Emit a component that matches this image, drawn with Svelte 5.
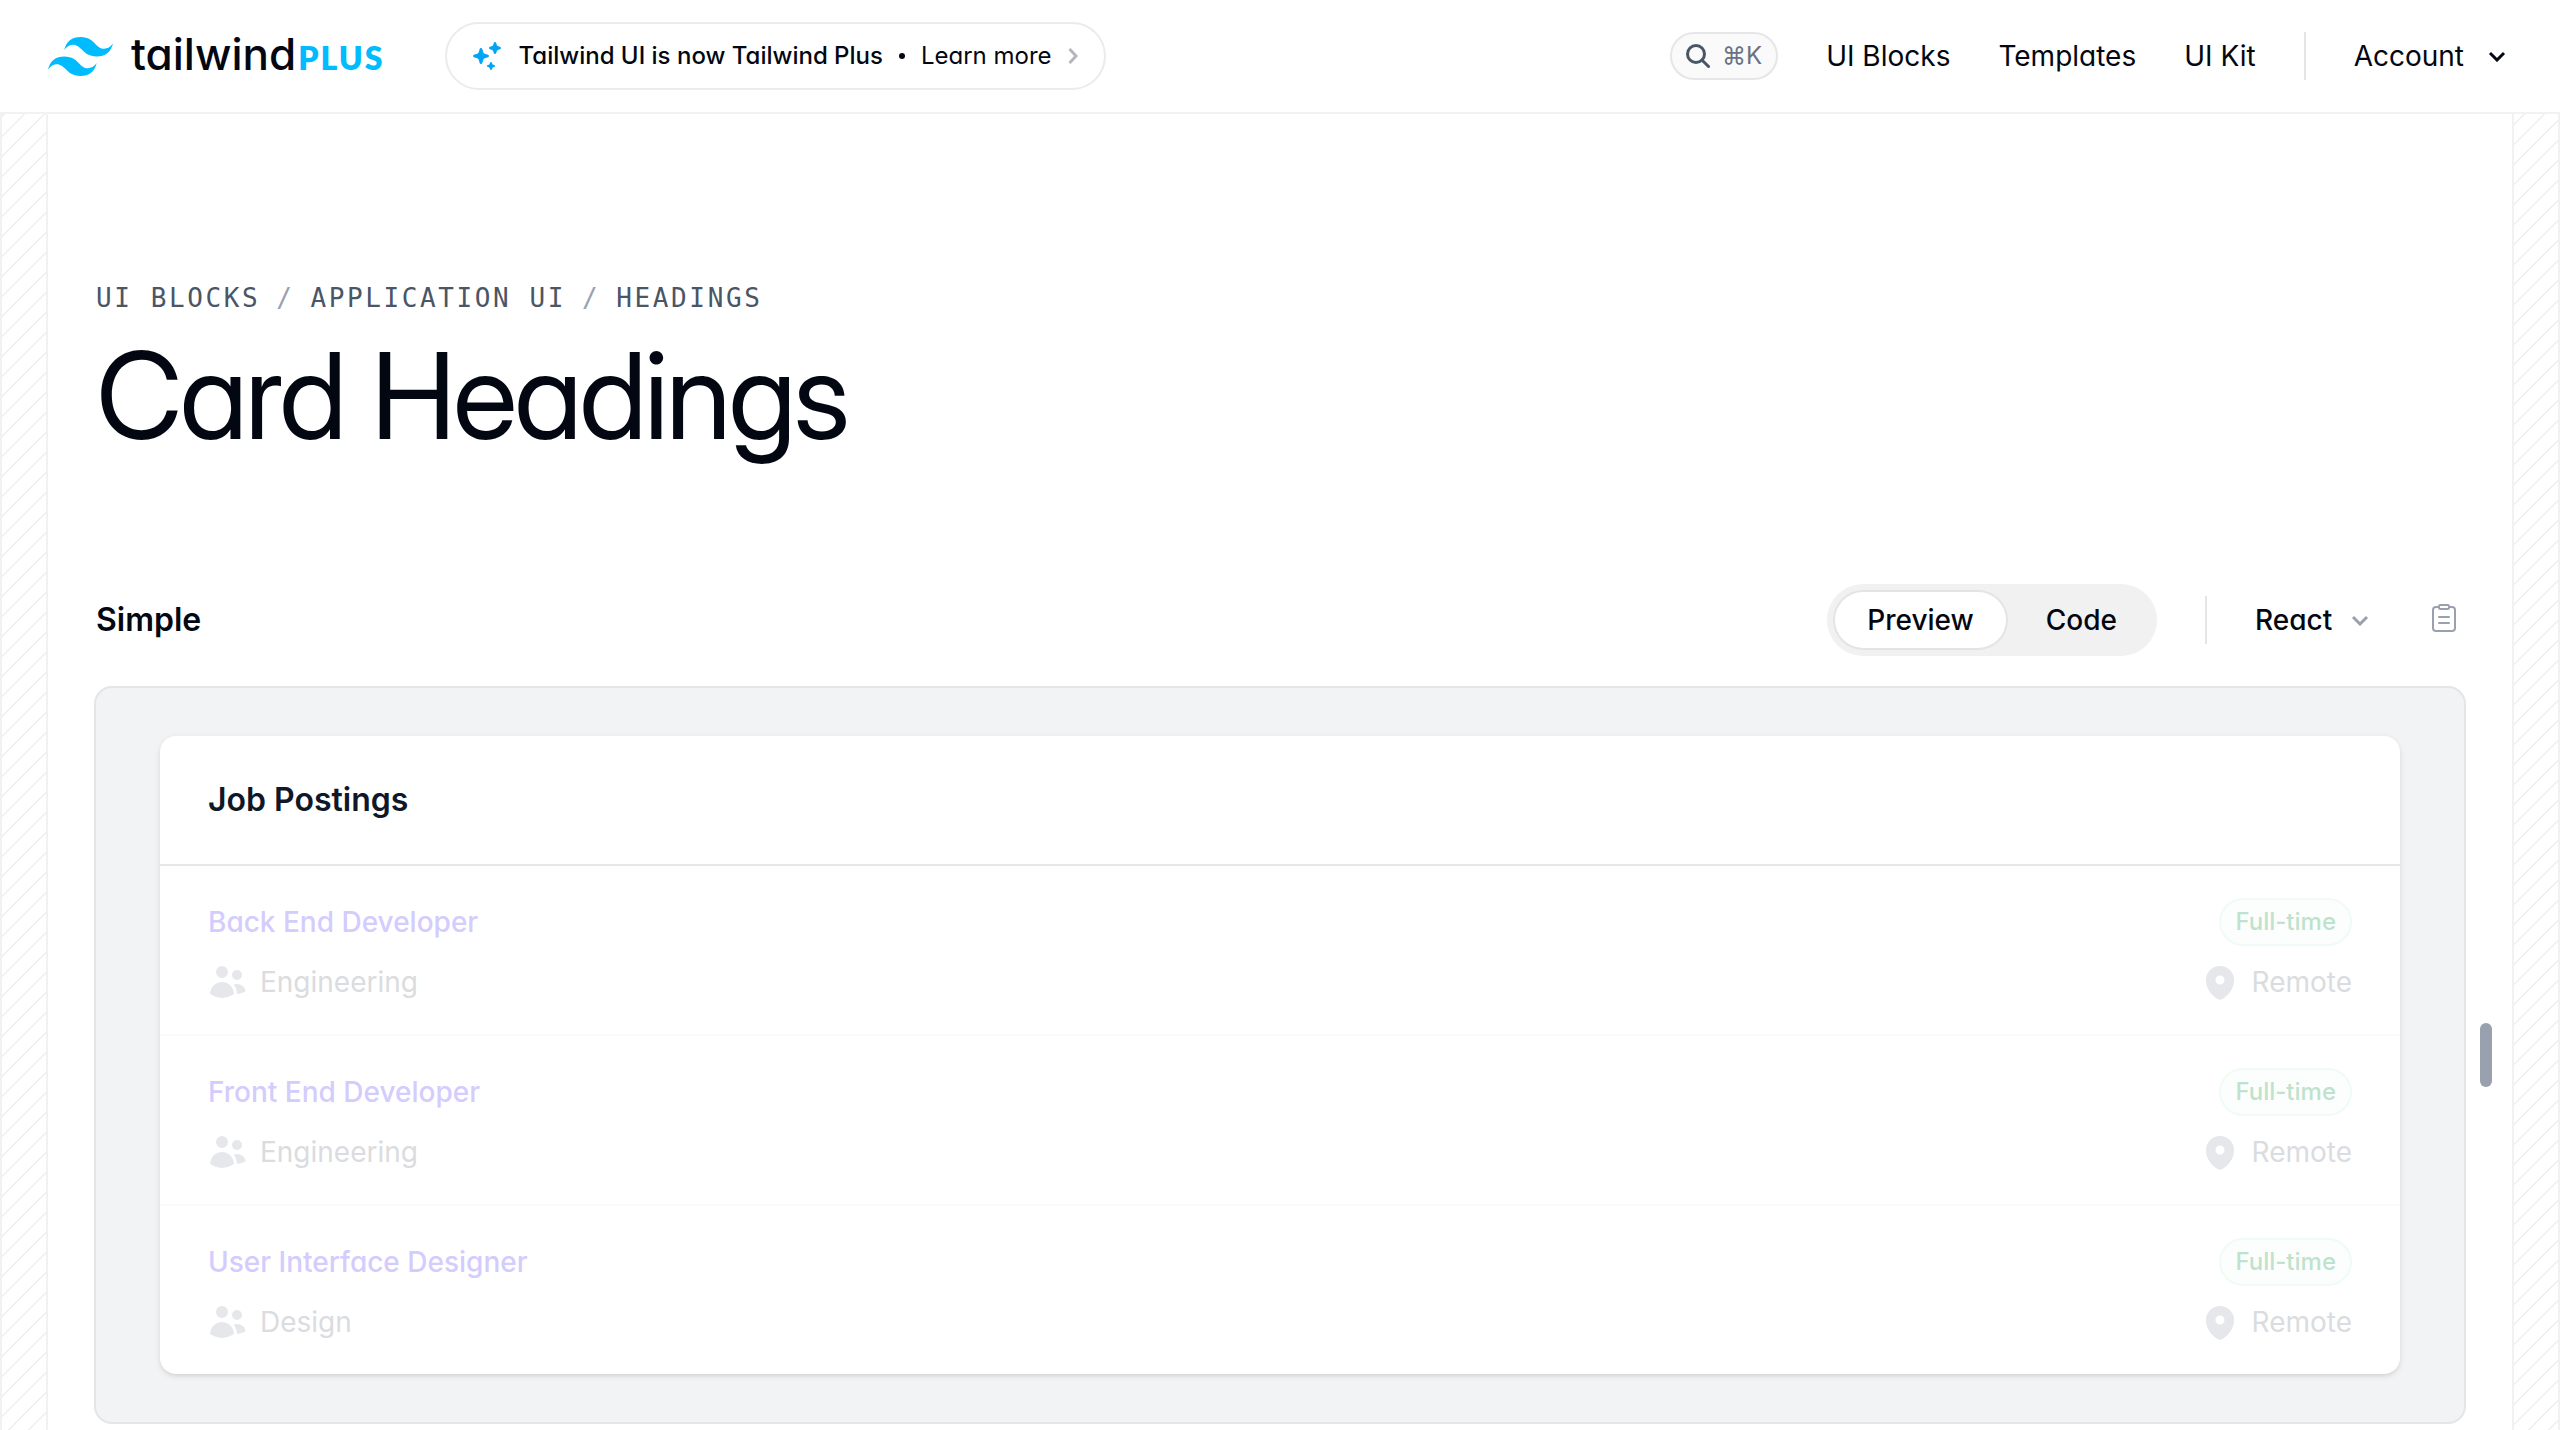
<script lang="ts">
  const nav = ['UI Blocks', 'Templates', 'UI Kit'];
  const crumbs = ['UI Blocks', 'Application UI', 'Headings'];
  const jobs = [
    { title: 'Back End Developer', team: 'Engineering' },
    { title: 'Front End Developer', team: 'Engineering' },
    { title: 'User Interface Designer', team: 'Design' },
  ];
</script>

<header class="topbar">
  <a class="logo" href="#home" aria-label="Tailwind Plus">
    <svg class="wave" viewBox="0 0 54 32.4" fill="currentColor" aria-hidden="true">
      <path d="M27 0c-7.2 0-11.7 3.6-13.5 10.8 2.7-3.6 5.85-4.95 9.45-4.05 2.054.513 3.522 2.004 5.147 3.653C30.744 13.09 33.808 16.2 40.5 16.2c7.2 0 11.7-3.6 13.5-10.8-2.7 3.6-5.85 4.95-9.45 4.05-2.054-.513-3.522-2.004-5.147-3.653C36.756 3.11 33.692 0 27 0zM13.5 16.2C6.3 16.2 1.8 19.8 0 27c2.7-3.6 5.85-4.95 9.45-4.05 2.054.514 3.522 2.004 5.147 3.653C17.244 29.29 20.308 32.4 27 32.4c7.2 0 11.7-3.6 13.5-10.8-2.7 3.6-5.85 4.95-9.45 4.05-2.054-.513-3.522-2.004-5.147-3.653C23.256 19.31 20.192 16.2 13.5 16.2z" />
    </svg>
    <span class="wordmark">tailwind</span><span class="plus">PLUS</span>
  </a>
  <a class="banner" href="#plus">
    <svg class="sparkles" viewBox="0 0 28 28" fill="currentColor" aria-hidden="true">
      <path d="M8 6c.7 0 1.100.4 1.300 1l1 3.200c.3.800.7 1.200 1.500 1.500l3.200 1c.6.200 1 .7 1 1.300s-.4 1.100-1 1.300l-3.200 1c-.8.3-1.200.7-1.500 1.500l-1 3.200c-.2.600-.6 1-1.300 1s-1.100-.4-1.300-1l-1-3.200c-.3-.8-.7-1.200-1.500-1.500l-3.200-1c-.6-.2-1-.7-1-1.300s.4-1.100 1-1.300l3.200-1c.8-.3 1.200-.7 1.500-1.500l1-3.200c.2-.6.6-1 1.300-1z" />
      <path d="M22 0c.6 0 1 .4 1.200 1l.5 1.500c.3 1 .8 1.500 1.800 1.800l1.500.5c.6.200 1 .6 1 1.200s-.4 1-1 1.200l-1.500.5c-1 .3-1.500.8-1.800 1.800l-.5 1.500c-.2.600-.6 1-1.200 1s-1-.4-1.200-1l-.5-1.500c-.3-1-.8-1.500-1.800-1.800l-1.500-.5c-.6-.2-1-.6-1-1.200s.4-1 1-1.200l1.500-.5c1-.3 1.500-.8 1.800-1.800l.5-1.500c.2-.6.6-1 1.200-1z" />
      <path d="M18 20c.5 0 .9.3 1 .8l.3.900c.2.600.4.8 1 1l.9.300c.5.100.8.500.8 1s-.3.900-.8 1l-.9.300c-.6.200-.8.400-1 1l-.3.900c-.1.500-.5.800-1 .8s-.9-.3-1-.8l-.3-.9c-.2-.6-.4-.8-1-1l-.9-.3c-.5-.1-.8-.5-.8-1s.3-.9.8-1l.9-.3c.6-.2.8-.4 1-1l.3-.9c.1-.5.5-.8 1-.8z" />
    </svg>
    <strong>Tailwind UI is now Tailwind Plus</strong>
    <svg class="dot" viewBox="0 0 6 6" fill="currentColor" aria-hidden="true"><circle cx="3" cy="3" r="3" /></svg>
    <span>Learn more</span>
    <svg class="next" viewBox="0 0 10 16" aria-hidden="true"><path d="M1.500 1 8 8l-6.500 7" /></svg>
  </a>
  <nav class="nav">
    <button class="search" type="button" aria-label="Search">
      <svg viewBox="0 0 24 24" aria-hidden="true"><circle cx="10" cy="10" r="8.500" /><path d="m16.200 16.200 6.300 6.300" /></svg>
      <kbd>⌘K</kbd>
    </button>
    {#each nav as item}
      <a href="#nav">{item}</a>
    {/each}
    <span class="rule"></span>
    <button class="account" type="button">
      Account
      <svg viewBox="0 0 18 11" aria-hidden="true"><path d="m2 2 7 7 7-7" /></svg>
    </button>
  </nav>
</header>

<div class="frame">
  <div class="gutter"></div>
  <main>
    <nav class="crumbs" aria-label="Breadcrumb">
      {#each crumbs as crumb, i}
        {#if i > 0}<span class="slash">/</span>{/if}
        <a href="#crumb">{crumb}</a>
      {/each}
    </nav>
    <h1>Card Headings</h1>

    <section>
      <div class="toolbar">
        <h2>Simple</h2>
        <div class="toggle">
          <button class="active" type="button">Preview</button>
          <button type="button">Code</button>
        </div>
        <span class="rule"></span>
        <label class="lang">
          <select aria-label="Framework">
            <option>React</option>
          </select>
          <svg viewBox="0 0 18 11" aria-hidden="true"><path d="m2 2 7 7 7-7" /></svg>
        </label>
        <button class="copy" type="button" aria-label="Copy code">
          <svg viewBox="0 0 24 28" aria-hidden="true">
            <path d="M6 3H4a3 3 0 0 0-3 3v18a3 3 0 0 0 3 3h16a3 3 0 0 0 3-3V6a3 3 0 0 0-3-3h-2" />
            <rect x="7" y="1" width="10" height="4" rx="1.500" />
            <path d="M7 13h10M7 19h10" />
          </svg>
        </button>
      </div>

      <div class="stage">
        <div class="preview">
          <article class="card">
            <h3>Job Postings</h3>
            <ul>
              {#each jobs as job}
                <li>
                  <div class="line">
                    <a href="#job">{job.title}</a>
                    <span class="badge">Full-time</span>
                  </div>
                  <div class="line meta">
                    <span class="fact">
                      <svg viewBox="0 0 20 20" fill="currentColor" aria-hidden="true">
                        <path d="M7 8a3 3 0 1 0 0-6 3 3 0 0 0 0 6ZM14.500 9a2.500 2.500 0 1 0 0-5 2.500 2.500 0 0 0 0 5ZM1.615 16.428a1.224 1.224 0 0 1-.569-1.175 6.002 6.002 0 0 1 11.908 0c.058.467-.172.920-.570 1.174A9.953 9.953 0 0 1 7 18a9.953 9.953 0 0 1-5.385-1.572ZM14.500 16h-.106c.070-.297.088-.611.048-.933a7.470 7.470 0 0 0-1.588-3.755 4.502 4.502 0 0 1 5.874 2.636.818.818 0 0 1-.360.980A7.465 7.465 0 0 1 14.500 16Z" />
                      </svg>
                      {job.team}
                    </span>
                    <span class="fact">
                      <svg viewBox="0 0 20 20" fill="currentColor" aria-hidden="true">
                        <path fill-rule="evenodd" d="m9.690 18.933.003.001C9.890 19.020 10 19 10 19s.110.020.308-.066l.002-.001.006-.003.018-.008a5.741 5.741 0 0 0 .281-.140c.186-.096.446-.240.757-.433.620-.384 1.445-.966 2.274-1.765C15.302 14.988 17 12.493 17 9A7 7 0 1 0 3 9c0 3.492 1.698 5.988 3.355 7.584a13.731 13.731 0 0 0 2.273 1.765 11.842 11.842 0 0 0 .976.544l.062.029.018.008.006.003ZM10 11.250a2.250 2.250 0 1 0 0-4.500 2.250 2.250 0 0 0 0 4.500Z" />
                      </svg>
                      Remote
                    </span>
                  </div>
                </li>
              {/each}
            </ul>
          </article>
        </div>
        <div class="handle"></div>
      </div>
    </section>
  </main>
  <div class="gutter"></div>
</div>

<style>
  :global(body) {
    background: #fff;
    color: #030712;
    font-family: Inter, sans-serif;
    font-size: 28px;
    line-height: 40px;
    font-feature-settings: 'cv11';
    -webkit-font-smoothing: antialiased;
  }
  :global(html) {
    scrollbar-width: none;
  }
  :global(#app) {
    display: flex;
    flex-direction: column;
    min-height: 100vh;
  }
  a {
    color: inherit;
    text-decoration: none;
  }
  button,
  select {
    appearance: none;
    margin: 0;
    padding: 0;
    border: 0;
    background: none;
    color: inherit;
    font: inherit;
    font-feature-settings: inherit;
  }
  h1,
  h2,
  h3,
  ul {
    margin: 0;
    padding: 0;
    list-style: none;
  }
  svg {
    display: block;
    flex: none;
  }

  .topbar {
    display: flex;
    align-items: center;
    height: 112px;
    padding: 0 48px;
    border-bottom: 2px solid #f2f2f3;
  }
  .logo {
    display: flex;
    align-items: baseline;
    line-height: 56px;
  }
  .wave {
    align-self: center;
    width: 65px;
    height: 39px;
    margin-right: 18px;
    color: #00bcff;
  }
  .wordmark {
    font-size: 44px;
    font-weight: 500;
  }
  .plus {
    margin-left: 2px;
    color: #00bcff;
    font-family: Lato, sans-serif;
    font-size: 32px;
    font-weight: 800;
    letter-spacing: 2px;
  }
  .banner {
    display: flex;
    align-items: center;
    margin-left: 60px;
    padding: 12px 26px;
    border: 2px solid #ebebec;
    border-radius: 34px;
    font-size: 24px;
  }
  .banner strong {
    font-weight: 500;
  }
  .sparkles {
    width: 28px;
    height: 28px;
    margin-right: 18px;
    color: #00a6f4;
  }
  .dot {
    width: 6px;
    height: 6px;
    margin: 0 16px;
  }
  .next {
    width: 10px;
    height: 16px;
    margin-left: 16px;
    fill: none;
    stroke: #b5b7bc;
    stroke-width: 3;
  }
  .nav {
    display: flex;
    align-items: center;
    gap: 48px;
    margin-left: auto;
  }
  .search {
    display: flex;
    align-items: center;
    gap: 12px;
    box-sizing: border-box;
    height: 48px;
    padding: 0 14px;
    border: 2px solid #e6e6e8;
    border-radius: 24px;
    background: #fafafa;
    color: #6a7282;
    font-size: 24px;
  }
  .search svg {
    width: 24px;
    height: 24px;
    fill: none;
    stroke: #4a5565;
    stroke-width: 3;
    stroke-linecap: round;
  }
  kbd {
    font-family: inherit;
  }
  .rule {
    width: 2px;
    height: 48px;
    background: #e5e5e7;
  }
  .account {
    display: flex;
    align-items: center;
    gap: 24px;
    padding-right: 6px;
  }
  .account svg,
  .lang svg {
    width: 18px;
    height: 11px;
    fill: none;
    stroke: currentColor;
    stroke-width: 3;
  }

  .frame {
    display: flex;
    flex: 1;
  }
  .gutter {
    flex: none;
    box-sizing: border-box;
    width: 48px;
    border: solid #f1f1f2;
    border-width: 0 2px;
    background-image: repeating-linear-gradient(
      315deg,
      #efeff0 0,
      #efeff0 2px,
      transparent 0,
      transparent 50%
    );
    background-size: 20px 20px;
    background-attachment: fixed;
  }
  main {
    flex: 1;
    padding: 160px 48px 0;
  }
  .crumbs {
    display: flex;
    gap: 16px;
    color: #4a5565;
    font-family: 'DejaVu Sans Mono', monospace;
    font-size: 26px;
    line-height: 48px;
    letter-spacing: 0.1em;
    text-transform: uppercase;
  }
  .slash {
    color: #99a1af;
  }
  h1 {
    margin-top: 14px;
    font-family: 'Inter Display', Inter, sans-serif;
    font-size: 120px;
    font-weight: 400;
    line-height: 120px;
    letter-spacing: -0.025em;
  }
  section {
    margin-top: 128px;
  }
  .toolbar {
    display: flex;
    align-items: center;
    font-weight: 500;
  }
  h2 {
    margin-right: auto;
    font-size: 32px;
    font-weight: 600;
  }
  .toggle {
    display: flex;
    gap: 8px;
    margin-right: 48px;
    padding: 8px;
    border-radius: 36px;
    background: #f1f1f1;
  }
  .toggle button {
    padding: 8px 32px;
    border-radius: 28px;
  }
  .toggle .active {
    background: #fff;
    box-shadow: 0 0 0 2px #e4e4e4;
  }
  .lang {
    display: flex;
    align-items: center;
    gap: 18px;
    margin: 0 63px 0 48px;
  }
  .lang svg {
    color: #99a1af;
  }
  .copy {
    margin: 0 8px 4px 0;
  }
  .copy svg {
    width: 24px;
    height: 28px;
    fill: none;
    stroke: #99a1af;
    stroke-width: 2;
    stroke-linecap: round;
  }

  .stage {
    display: flex;
    align-items: center;
    gap: 16px;
    margin: 32px -28px 0 0;
  }
  .preview {
    flex: 1;
    padding: 48px 64px;
    border-radius: 16px;
    background: #f2f3f5;
    box-shadow: 0 0 0 2px #e4e5e7;
  }
  .handle {
    width: 12px;
    height: 64px;
    border-radius: 6px;
    background: #99a1af;
  }
  .card {
    border-radius: 16px;
    background: #fff;
    box-shadow:
      0 2px 6px rgba(0, 0, 0, 0.1),
      0 2px 4px -2px rgba(0, 0, 0, 0.1);
  }
  h3 {
    padding: 40px 48px;
    border-bottom: 2px solid #e5e7eb;
    color: #101828;
    font-size: 32px;
    font-weight: 600;
    line-height: 48px;
  }
  li {
    padding: 32px 48px;
  }
  li + li {
    border-top: 2px solid #f9fafa;
  }
  .line {
    display: flex;
    align-items: center;
    justify-content: space-between;
    color: #d3ccfd;
    font-weight: 500;
  }
  .badge {
    padding: 4px 16px;
    border-radius: 24px;
    background: #fcfefd;
    box-shadow: inset 0 0 0 2px #effbf4;
    color: #bfe2cd;
    font-size: 24px;
  }
  .meta {
    margin-top: 16px;
    color: #dadce0;
    font-weight: 400;
  }
  .fact {
    display: flex;
    align-items: center;
    gap: 12px;
  }
  .fact svg {
    width: 40px;
    height: 40px;
    color: #e5e7eb;
  }
</style>
